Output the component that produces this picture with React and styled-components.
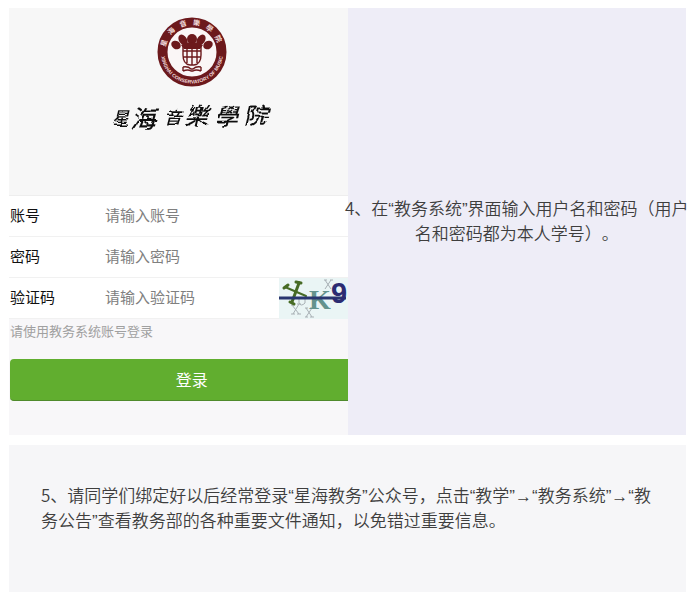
import React from "react";
import styled, { createGlobalStyle } from "styled-components";

const GlobalStyle = createGlobalStyle`
  * { box-sizing: border-box; }
  body {
    margin: 0;
    background: #ffffff;
    color: #3e3e3e;
    font-family: "Liberation Sans", "Noto Sans CJK SC", sans-serif;
  }
`;

const Page = styled.main`
  display: flex;
  flex-direction: column;
  gap: 10px;
  padding: 8px 13px 11px 9px;
`;

const Step = styled.section`
  display: grid;
  grid-template-columns: 1fr 1fr;
  background: #eeedf7;
`;

const Phone = styled.form`
  display: flex;
  flex-direction: column;
  min-width: 0;
  overflow: hidden;
  padding-bottom: 34px;
  background: #f8f7f9;
  font-family: "Noto Sans CJK SC", sans-serif;
`;

const Brand = styled.header`
  display: flex;
  flex-direction: column;
  align-items: center;
  gap: 8px;
  height: 187px;
  padding: 9px 0 0 28px;
  background: #f7f7f7;
`;

const Drawing = styled.svg`
  display: block;
  flex: none;
`;

const Fields = styled.div`
  background: #ffffff;
  border-top: 1px solid #eeeeee;
`;

const Field = styled.div`
  display: flex;
  align-items: center;
  height: 41px;
  padding-left: 1px;
  border-bottom: 1px solid #f1f1f1;
`;

const Label = styled.label`
  flex: none;
  width: 95px;
  padding-bottom: 2px;
  color: #111111;
  font-size: 15px;
  line-height: 24px;
`;

const Input = styled.input`
  flex: 1;
  min-width: 0;
  padding: 0 0 2px;
  border: 0;
  outline: 0;
  background: transparent;
  color: #111111;
  font-family: inherit;
  font-size: 15px;
  line-height: 24px;

  &::placeholder {
    color: #808080;
    opacity: 1;
  }
`;

const Hint = styled.p`
  margin: 0;
  padding: 2px 0 0 1px;
  color: #a0a0a0;
  font-size: 13px;
  line-height: 20px;
`;

const LoginButton = styled.button`
  height: 42px;
  margin: 18px 0 0 1px;
  padding: 0 0 2px 26px;
  border: 0;
  border-bottom: 1px solid #4f8a2c;
  border-radius: 4px 0 0 4px;
  background: #61ae2f;
  color: #ffffff;
  font-family: inherit;
  font-size: 16px;
  line-height: 24px;
  cursor: pointer;
`;

const Caption = styled.div`
  display: flex;
  align-items: center;
  justify-content: center;
  min-width: 0;
`;

const Copy = styled.p`
  margin: 0;
  font-size: 17px;
  line-height: 25px;
  font-weight: 350;
  text-spacing-trim: space-all;
  text-align: ${({ $align }) => $align || "left"};
  white-space: ${({ $align }) => ($align ? "nowrap" : "normal")};
`;

const Digit = styled.span`
  font-family: "Noto Sans CJK SC", sans-serif;
  line-height: 16px;
`;

const Note = styled.section`
  min-height: 147px;
  padding: 39px 32px 58px;
  background: #f6f6f8;
`;

function Emblem() {
  return (
    <Drawing width="70" height="70" viewBox="0 0 70 70" role="img" aria-label="星海音樂學院校徽">
      <defs>
        <path id="ring-top" d="M8 35a27 27 0 0 1 54 0" />
        <path id="ring-bottom" d="M4.5 30a31 31 0 1 0 61 0" />
      </defs>
      <circle cx="35" cy="35" r="29.5" fill="#faf6f6" stroke="#6c191c" strokeWidth="10" />
      <text fill="#f3dede" fontSize="7" fontWeight="700" fontFamily="Noto Sans CJK TC, sans-serif">
        {["星", "海", "音", "樂", "學", "院"].map((c, i) => (
          <textPath key={c} href="#ring-top" startOffset={`${6 + i * 15}%`}>{c}</textPath>
        ))}
      </text>
      <text fill="#f3dede" fontSize="5" fontWeight="700" fontFamily="Liberation Sans, sans-serif" textAnchor="middle">
        <textPath href="#ring-bottom" startOffset="50%">XINGHAI CONSERVATORY OF MUSIC</textPath>
      </text>
      <g fill="#6c191c">
        <ellipse cx="35" cy="22" rx="5" ry="5" />
        <ellipse cx="26" cy="23" rx="4" ry="6" transform="rotate(-32 26 23)" />
        <ellipse cx="44" cy="23" rx="4" ry="6" transform="rotate(32 44 23)" />
        <ellipse cx="19" cy="28" rx="4" ry="5" transform="rotate(-58 19 28)" />
        <ellipse cx="51" cy="28" rx="4" ry="5" transform="rotate(58 51 28)" />
        <path d="M24 28Q35 22 46 28L43 32H27Z" />
      </g>
      <g fill="none" stroke="#6c191c" strokeWidth="1.4">
        <path d="M26 29v9q0 9 7 10h4q7-1 7-10V29M26 34h18M26 40h18M30 30v16M35 30v18M40 30v16" />
        <path d="M26 50q5-1 8 2h2q3-3 8-2M26 54q5-2 8 0h2q3-2 8 0M26 50v4M44 50v4" />
      </g>
    </Drawing>
  );
}

const brushGlyphs = [
  { char: "星", x: 8, y: 29, size: 17 },
  { char: "海", x: 26, y: 33, size: 25 },
  { char: "音", x: 60, y: 29, size: 18 },
  { char: "樂", x: 80, y: 30, size: 24 },
  { char: "學", x: 111, y: 30, size: 23 },
  { char: "院", x: 140, y: 29, size: 23 },
];

function SchoolName() {
  return (
    <Drawing width="176" height="46" viewBox="0 0 176 46" role="img" aria-label="星海音樂學院">
      <defs>
        <filter id="brush" x="-5%" y="-10%" width="110%" height="120%">
          <feTurbulence type="fractalNoise" baseFrequency="0.08" numOctaves="1" seed="4" />
          <feDisplacementMap in="SourceGraphic" scale="6" xChannelSelector="R" yChannelSelector="G" />
        </filter>
      </defs>
      <text fill="#111111" fontWeight="500" fontStyle="italic" fontFamily="Noto Sans CJK SC, sans-serif" filter="url(#brush)">
        {brushGlyphs.map(({ char, x, y, size }) => (
          <tspan key={char} x={x} y={y} fontSize={size}>{char}</tspan>
        ))}
      </text>
    </Drawing>
  );
}

function Captcha() {
  return (
    <Drawing width="69" height="41" viewBox="0 0 69 41" role="img" aria-label="验证码图片">
      <rect width="69" height="41" fill="#eaf5f5" />
      <g fill="none" stroke="#a8b0b5" strokeWidth="1">
        <path d="M13 27l7 9M20 26l-6 10M12 27h3M18 26h4M12 36h4M18 36h4" />
        <path d="M27 30l6 9M33 30l-6 9M26 30h3M31 30h4M26 39h3M31 39h4" />
        <path d="M20 19v6q2 4 6 0v-6M46 2l6 9M52 2l-6 9M45 2h3M51 2h3" />
      </g>
      <text x="30" y="31" fill="#64938d" fontFamily="Liberation Serif, serif" fontSize="28" fontWeight="700">K</text>
      <g fill="none" stroke="#476b25" strokeLinecap="round">
        <path d="M6 9L27 18" strokeWidth="2" />
        <path d="M20 5L13 24" strokeWidth="3" />
        <path d="M5 10l4-3M17 4l5 1M11 24l4 2" strokeWidth="3" />
      </g>
      <path d="M0 20H67" stroke="#29366f" strokeWidth="3" />
      <text x="52" y="25" fill="#2b2c72" fontFamily="Liberation Sans, sans-serif" fontSize="29" fontWeight="700">9</text>
    </Drawing>
  );
}

const fields = [
  { id: "account", label: "账号", placeholder: "请输入账号", type: "text" },
  { id: "password", label: "密码", placeholder: "请输入密码", type: "password" },
  { id: "code", label: "验证码", placeholder: "请输入验证码", type: "text", captcha: true },
];

export default function App() {
  return (
    <>
      <GlobalStyle />
      <Page lang="zh-CN">
        <Step>
          <Phone onSubmit={(event) => event.preventDefault()}>
            <Brand>
              <Emblem />
              <SchoolName />
            </Brand>
            <Fields>
              {fields.map(({ id, label, placeholder, type, captcha }) => (
                <Field key={id}>
                  <Label htmlFor={id}>{label}</Label>
                  <Input id={id} type={type} placeholder={placeholder} />
                  {captcha && <Captcha />}
                </Field>
              ))}
            </Fields>
            <Hint>请使用教务系统账号登录</Hint>
            <LoginButton type="submit">登录</LoginButton>
          </Phone>
          <Caption>
            <Copy $align="center">
              <Digit>4</Digit>、在“教务系统”界面输入用户名和密码（用户<br />
              名和密码都为本人学号）。
            </Copy>
          </Caption>
        </Step>
        <Note>
          <Copy>
            <Digit>5</Digit>、请同学们绑定好以后经常登录“星海教务”公众号，点击“教学”→“教务系统”→“教务公告”查看教务部的各种重要文件通知，以免错过重要信息。
          </Copy>
        </Note>
      </Page>
    </>
  );
}
